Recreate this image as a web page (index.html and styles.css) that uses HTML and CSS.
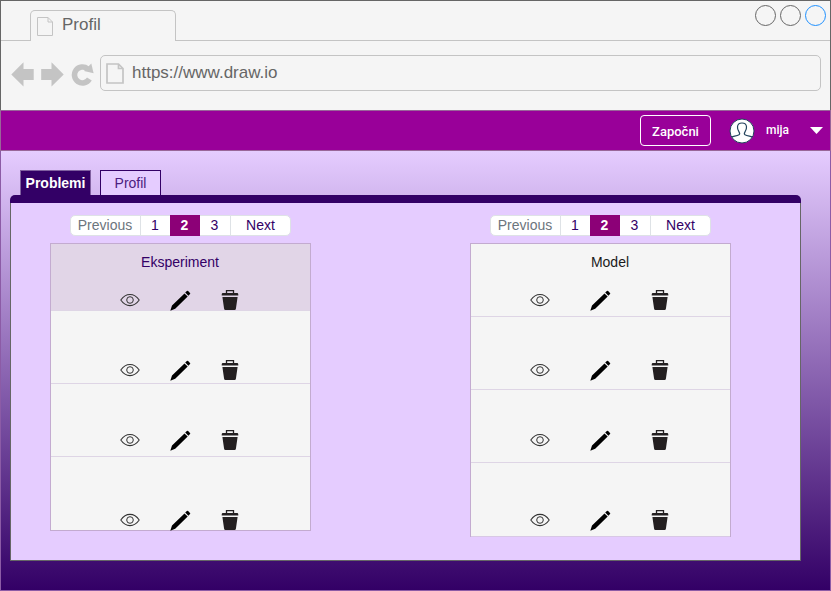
FILE: index.html
```html
<!DOCTYPE html>
<html lang="hr">
<head>
<meta charset="utf-8">
<title>Profil</title>
<link rel="stylesheet" href="styles.css">
</head>
<body>
<svg class="sprite" aria-hidden="true">
  <symbol id="eye" viewBox="0 0 20 20"><path d="M.8 10C3.300 6.300 6.500 4.400 10 4.400S16.700 6.300 19.200 10C16.700 13.700 13.500 15.600 10 15.600S3.300 13.700.8 10Z" fill="none" stroke="#333" stroke-width="1.050"/><circle cx="10" cy="10" r="3.300" fill="none" stroke="#333"/></symbol>
  <symbol id="pencil" viewBox="0 0 21 21"><path d="M.3 20.800L2 15.600 14.500 3.400 17.700 6.600 5.200 18.800ZM15.200 2.600L16.900 .9Q17.500 .4 18.100 1L20 2.900Q20.600 3.500 20 4.100L18.400 5.800Z" fill="#000"/></symbol>
  <symbol id="trash" viewBox="0 0 18 20"><path d="M5.500 3.300V.7H12.500V3.300" fill="none" stroke="#231f20" stroke-width="1.300"/><path d="M.7 5.600V4.400Q.7 3 2 3H16Q17.300 3 17.300 4.400V5.600ZM1.400 7H16.600L14.900 18.800Q14.700 20 13.600 20H4.400Q3.300 20 3.100 18.800Z" fill="#231f20"/></symbol>
  <symbol id="page" viewBox="0 0 16 19"><path d="M.5.5H11L15.500 5V18.500H.5ZM11 .5V5H15.500" fill="none" stroke="#c4c4c4"/></symbol>
</svg>
<div class="window">
  <header class="chrome">
    <div class="tabstrip">
      <div class="browser-tab"><svg class="tab-page"><use href="#page"/></svg><span>Profil</span></div>
      <div class="controls"><i></i><i></i><i class="blue"></i></div>
    </div>
    <div class="toolbar">
      <svg class="nav" viewBox="0 0 84 26"><path d="M.3 13.500L12.500 1.300V8H22.700V19H12.500V25.500ZM52.700 13.500L40.500 1.300V8H30.200V19H40.500V25.500Z" fill="#c4c4c4"/><path d="M78.400 18A8 8 0 1 1 76.600 7.800" fill="none" stroke="#c4c4c4" stroke-width="5.500"/><path d="M73 10L80.300 2.500 82.600 12.300Z" fill="#c4c4c4"/></svg>
      <div class="address"><svg class="address-page" viewBox="0 0 18 21"><path d="M1 1H12.500L17 5.500V20H1ZM12.500 1V5.500H17" fill="none" stroke="#c4c4c4" stroke-width="1.700"/></svg><span>https://www.draw.io</span></div>
    </div>
  </header>
  <nav class="appbar">
    <div class="start">Započni</div>
    <svg class="avatar" viewBox="0 0 26 26"><circle cx="13" cy="13" r="12" fill="#fff" stroke="#23445d"/><path d="M2.700 19C4.300 18.200 7.800 17.900 10 16.700 11 16 10.800 15 10 13.800 8.900 12.200 8.300 10.500 8.500 8.700 8.700 6.300 10.500 5 13 5S17.300 6.300 17.500 8.700C17.700 10.500 17.100 12.200 16 13.800 15.200 15 15 16 16 16.700 18.200 17.900 21.700 18.200 23.300 19" fill="none" stroke="#23445d" stroke-width="1.200"/></svg>
    <span class="user">mija</span>
    <svg class="caret" viewBox="0 0 13 7"><path d="M0 0H13L6.500 7Z" fill="#fff"/></svg>
  </nav>
  <main class="content">
    <div class="tabs"><div class="tab active">Problemi</div><div class="tab">Profil</div></div>
    <div class="panel-top"></div>
    <section class="panel">
      <div class="column left">
        <div class="pager"><span class="prev">Previous</span><span class="first">1</span><span class="current">2</span><span class="last">3</span><span class="next">Next</span></div>
        <div class="list">
          <div class="row selected"><h2>Eksperiment</h2><div class="actions"><svg><use href="#eye"/></svg><svg><use href="#pencil"/></svg><svg><use href="#trash"/></svg></div></div>
          <div class="row"><div class="actions"><svg><use href="#eye"/></svg><svg><use href="#pencil"/></svg><svg><use href="#trash"/></svg></div></div>
          <div class="row"><div class="actions"><svg><use href="#eye"/></svg><svg><use href="#pencil"/></svg><svg><use href="#trash"/></svg></div></div>
          <div class="row"><div class="actions"><svg><use href="#eye"/></svg><svg><use href="#pencil"/></svg><svg><use href="#trash"/></svg></div></div>
        </div>
      </div>
      <div class="column right">
        <div class="pager"><span class="prev">Previous</span><span class="first">1</span><span class="current">2</span><span class="last">3</span><span class="next">Next</span></div>
        <div class="list">
          <div class="row"><h2>Model</h2><div class="actions"><svg><use href="#eye"/></svg><svg><use href="#pencil"/></svg><svg><use href="#trash"/></svg></div></div>
          <div class="row"><div class="actions"><svg><use href="#eye"/></svg><svg><use href="#pencil"/></svg><svg><use href="#trash"/></svg></div></div>
          <div class="row"><div class="actions"><svg><use href="#eye"/></svg><svg><use href="#pencil"/></svg><svg><use href="#trash"/></svg></div></div>
          <div class="row"><div class="actions"><svg><use href="#eye"/></svg><svg><use href="#pencil"/></svg><svg><use href="#trash"/></svg></div></div>
        </div>
      </div>
    </section>
  </main>
</div>
</body>
</html>
```
FILE: styles.css
```css
* { box-sizing: border-box; }
body { margin: 0; font: 14px/20px "Liberation Sans", Arial, sans-serif; overflow: hidden; }
svg { display: block; flex: none; }
.sprite { display: none; }
.window { width: 831px; height: 591px; }

.chrome { height: 110px; background: #f5f5f5; border: 1px solid #666; border-bottom: 0; color: #666; font-size: 17px; }
.tabstrip { height: 40px; padding: 9px 0 0 29px; display: flex; justify-content: space-between; border-bottom: 1px solid #c4c4c4; }
.browser-tab { width: 146px; height: 31px; background: #f5f5f5; border: 1px solid #c4c4c4; border-bottom: 0; border-radius: 5px 5px 0 0; display: flex; padding: 4px 0 0 6px; }
.tab-page { width: 16px; height: 19px; margin: 2px 9px 0 0; }
.controls { display: flex; gap: 4px; margin: -5px 4px 0 0; }
.controls i { width: 21px; height: 21px; border: 1px solid #666; border-radius: 50%; }
.controls .blue { border-color: #1e90ff; }
.toolbar { display: flex; padding: 14px 9px 0 10px; }
.nav { width: 84px; height: 26px; margin: 6px 5px 0 0; }
.address { flex: 1; height: 36px; border: 1px solid #c4c4c4; border-radius: 5px; display: flex; align-items: center; padding: 0 5px 1px; }
.address-page { width: 18px; height: 21px; margin: 1px 8px 0 0; }

.appbar { height: 41px; background: #990099; border: 1px solid #996699; display: flex; color: #fff; font-family: Roboto, sans-serif; font-weight: 500; padding-left: 639px; }
.start { width: 71px; height: 31px; border: 1px solid #fff; border-radius: 4px; margin-top: 4px; text-align: center; font-size: 13px; line-height: 31px; }
.avatar { width: 26px; height: 26px; margin: 7px 11px 0 18px; }
.user { width: 44px; font-size: 12px; line-height: 38px; }
.caret { width: 13px; height: 7px; margin-top: 16px; }

.content { height: 440px; padding: 19px 29px 0 9px; border: 1px solid #8c5ba6; border-top: 0; background: linear-gradient(#e5ccff, #330066); }
.tabs { display: flex; gap: 9px; height: 25px; padding-left: 10px; }
.tab { width: 61px; border: 1px solid #330066; border-bottom: 0; background: #e5ccff; color: #4c2080; text-align: center; line-height: 25px; }
.tab.active { width: 71px; background: #330066; border-color: #8060a0; color: #fff; font-weight: bold; }
.panel-top { height: 8px; width: 791px; background: #330066; border-radius: 5px 5px 0 0; }
.panel { width: 791px; height: 358px; border: 1px solid #666; border-top: 0; background: #e5ccff; display: flex; gap: 159px; padding: 12px 0 0 39px; }
.column { width: 261px; }
.pager { width: 221px; height: 21px; margin-left: 20px; display: flex; background: #fff; border: 1px solid #dee2e6; border-radius: 5px; line-height: 19px; color: #330066; text-align: center; }
.pager span { width: 30px; border-right: 1px solid #dee2e6; }
.pager .prev { width: 70px; color: #6c757d; padding-right: 1px; }
.pager .first { width: 29px; border: 0; padding-right: 1px; }
.pager .current { background: #8c0077; color: #fff; font-weight: bold; margin: -1px 0; line-height: 21px; border: 0; padding-right: 1px; }
.pager .last { width: 31px; padding-right: 1px; }
.pager .next { width: 59px; border: 0; }
.list { margin-top: 7px; border: 1px solid #c3abd0; border-bottom: 0; background: #f5f5f5; }
.row { height: 73px; border-bottom: 1px solid #ded5e5; }
.row.selected { height: 67px; background: #e1d5e7; }
.row h2 { margin: 0; padding: 8px 0 0 19px; height: 46px; font-size: 14px; font-weight: normal; text-align: center; color: #1a1a1a; }
.row.selected h2 { color: #330066; padding: 8px 1px 0 0; }
.row:last-child { height: 74px; border-bottom-color: #c3abd0; }
.right .row:last-child { border-bottom-color: #d8c8e5; }
.actions { display: flex; height: 20px; padding-left: 69px; }
.actions svg { width: 20px; height: 20px; }
.actions svg:nth-child(2) { width: 21px; height: 21px; margin: 0 30px; }
.actions svg:nth-child(3) { width: 18px; }
.right .actions { padding-left: 59px; }
.right .actions svg:nth-child(2) { margin: 0 40px; }
.left .row:nth-child(2) { padding-top: 49px; }
.left .row:nth-child(3) { padding-top: 46px; }
.left .row:nth-child(4) { padding-top: 53px; }
.right .row:nth-child(2) { padding-top: 43px; }
.right .row:nth-child(3) { padding-top: 40px; }
.right .row:nth-child(4) { padding-top: 47px; }
```
